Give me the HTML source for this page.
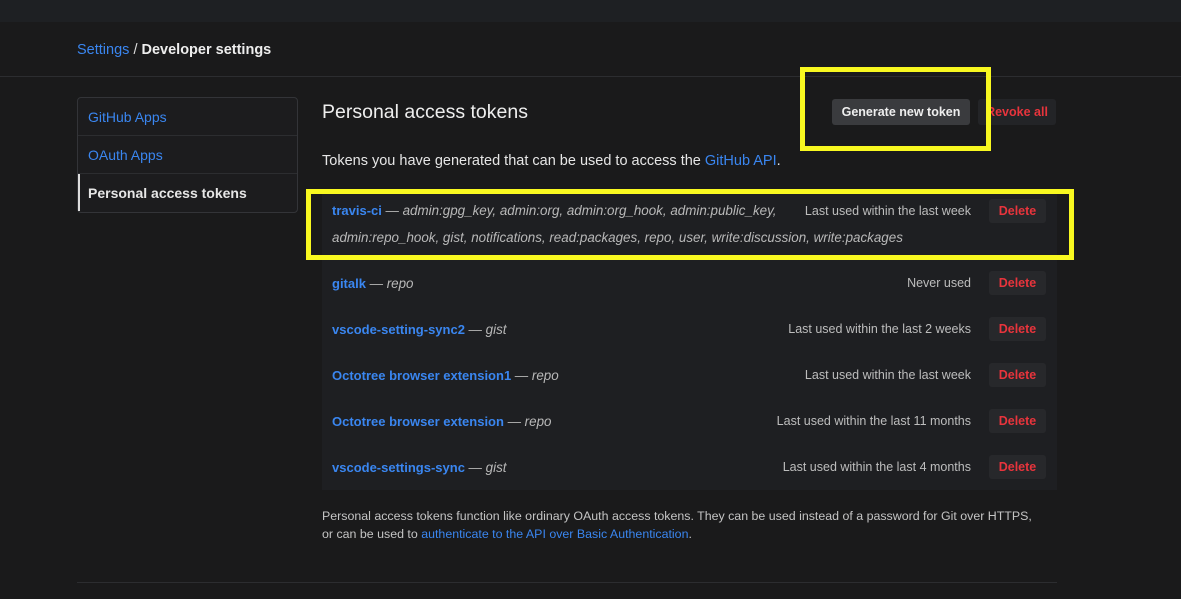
<!DOCTYPE html>
<html><head><style>
body{margin:0;width:1181px;height:599px;background:#1a1a1b;font-family:"Liberation Sans",sans-serif;position:relative;overflow:hidden;color:#d0d0d0}
.a{position:absolute;white-space:nowrap}
.top{left:0;top:0;width:1181px;height:22px;background:#1e2023}
.blue{color:#3a86f0}
.nav{left:77px;top:97px;width:219px;height:114px;border:1px solid #333438;border-radius:4px;background:#1c1c1e}
.nav div{height:37px;line-height:39px;padding-left:10px;font-size:14px;border-bottom:1px solid #2c2d30}
.list{left:322px;top:190px;width:735px;height:300px;background:#1e1f22}
.name{font-size:13px;font-weight:bold;color:#3a86f0}
.sc{font-style:italic;color:#b8b8b8;font-weight:normal;font-size:13.4px}
.used{font-size:12.5px;color:#bdbdbd;text-align:right;width:300px}
.del{width:57px;height:24px;background:#27282b;border-radius:3px;color:#e8343c;font-size:12.5px;font-weight:bold;text-align:center;line-height:24px}
.yl{border:5px solid #f8f820;box-sizing:border-box}
</style></head><body>
<div class="a top"></div>
<div class="a" style="left:77px;top:42px;font-size:14.5px"><span class="blue">Settings</span> <span style="color:#ddd">/</span> <b style="color:#eee">Developer settings</b></div>
<div class="a" style="left:0;top:76px;width:1181px;height:1px;background:#2c2d30"></div>
<div class="a nav"><div class="blue">GitHub Apps</div><div class="blue">OAuth Apps</div><div style="border:0;border-left:2px solid #ddd;padding-left:8px;color:#e6e6e6;font-weight:bold">Personal access tokens</div></div>
<div class="a" style="left:322px;top:101px;font-size:19.5px;color:#eee">Personal access tokens</div>
<div class="a" style="left:832px;top:99px;width:138px;height:26px;background:#3a3b3e;border-radius:3px;color:#eee;font-size:12.5px;font-weight:bold;text-align:center;line-height:26px">Generate new token</div>
<div class="a" style="left:978px;top:99px;width:78px;height:26px;background:#232427;border-radius:3px;color:#e8343c;font-size:12.5px;font-weight:bold;text-align:center;line-height:26px">Revoke all</div>
<div class="a" style="left:322px;top:153px;font-size:14.5px;color:#e6e6e6">Tokens you have generated that can be used to access the <span class="blue">GitHub API</span>.</div>
<div class="a list"></div>
<div class="a name" style="left:332px;top:203px">travis-ci <span class="sc">— admin:gpg_key, admin:org, admin:org_hook, admin:public_key,</span></div>
<div class="a sc" style="left:332px;top:230px">admin:repo_hook, gist, notifications, read:packages, repo, user, write:discussion, write:packages</div>
<div class="a used" style="left:671px;top:204px">Last used within the last week</div>
<div class="a del" style="left:989px;top:199px">Delete</div>
<div class="a name" style="left:332px;top:276px">gitalk <span class="sc">— repo</span></div>
<div class="a used" style="left:671px;top:276px">Never used</div><div class="a del" style="left:989px;top:271px">Delete</div>
<div class="a name" style="left:332px;top:322px">vscode-setting-sync2 <span class="sc">— gist</span></div>
<div class="a used" style="left:671px;top:322px">Last used within the last 2 weeks</div><div class="a del" style="left:989px;top:317px">Delete</div>
<div class="a name" style="left:332px;top:368px">Octotree browser extension1 <span class="sc">— repo</span></div>
<div class="a used" style="left:671px;top:368px">Last used within the last week</div><div class="a del" style="left:989px;top:363px">Delete</div>
<div class="a name" style="left:332px;top:414px">Octotree browser extension <span class="sc">— repo</span></div>
<div class="a used" style="left:671px;top:414px">Last used within the last 11 months</div><div class="a del" style="left:989px;top:409px">Delete</div>
<div class="a name" style="left:332px;top:460px">vscode-settings-sync <span class="sc">— gist</span></div>
<div class="a used" style="left:671px;top:460px">Last used within the last 4 months</div><div class="a del" style="left:989px;top:455px">Delete</div>
<div class="a" style="left:322px;top:507px;font-size:12.4px;line-height:18px;color:#c4c4c4">Personal access tokens function like ordinary OAuth access tokens. They can be used instead of a password for Git over HTTPS,<br>or can be used to <span class="blue">authenticate to the API over Basic Authentication</span>.</div>
<div class="a" style="left:77px;top:582px;width:980px;height:1px;background:#2c2d30"></div>
<div class="a yl" style="left:800px;top:67px;width:191px;height:84px"></div>
<div class="a yl" style="left:306px;top:189px;width:768px;height:71px"></div>
</body></html>
